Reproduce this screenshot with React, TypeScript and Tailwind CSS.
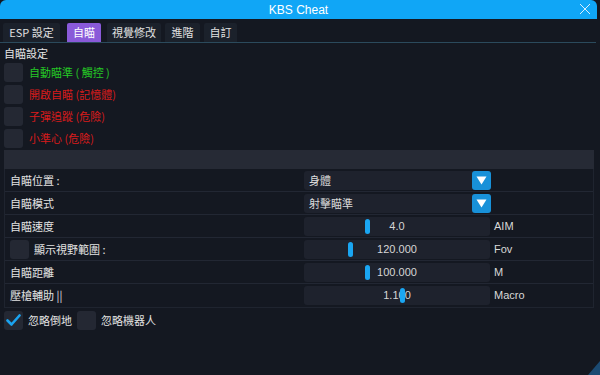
import React from "react";

const font = { fontFamily: '"Noto Sans CJK TC", "Liberation Sans", sans-serif' };

function Box({ checked = false }: { checked?: boolean }) {
  return (
    <div className="w-[19px] h-[19px] rounded-[3px] bg-[#242833] flex items-center justify-center shrink-0">
      {checked && (
        <svg width="15" height="13" viewBox="0 0 15 13">
          <path d="M1.5 6.5 L5.5 10.5 L13.5 1.5" fill="none" stroke="#1aa3f0" strokeWidth="2.6" strokeLinecap="round" strokeLinejoin="round" />
        </svg>
      )}
    </div>
  );
}

function Combo({ value }: { value: string }) {
  return (
    <div className="w-[187px] h-[19px] rounded-[3px] bg-[#1e222d] flex items-center justify-between">
      <span className="pl-[5px] text-[11px] text-[#dcdcdc]">{value}</span>
      <div className="w-[19px] h-[19px] rounded-[3px] bg-[#1891d9] flex items-center justify-center">
        <svg width="11" height="9" viewBox="0 0 11 9">
          <path d="M0.5 0.5 L10.5 0.5 L5.5 8.5 Z" fill="#ffffff" />
        </svg>
      </div>
    </div>
  );
}

function Slider({ value, pos }: { value: string; pos: number }) {
  return (
    <div className="relative w-[186px] h-[19px] rounded-[3px] bg-[#1e222d] flex items-center justify-center">
      <span className="text-[11px] text-[#d6d6d6]" style={{ fontFamily: '"Liberation Sans", sans-serif' }}>{value}</span>
      <div className="absolute top-[2px] w-[5px] h-[15px] rounded-[3px] bg-[#1aa6f2]" style={{ left: pos }} />
    </div>
  );
}

function Row({ label, right, unit, last = false }: { label: React.ReactNode; right: React.ReactNode; unit?: string; last?: boolean }) {
  return (
    <div className={`flex h-[23px] items-center ${last ? "" : "border-b border-[#222733]"}`}>
      <div className="w-[299px] pl-[5px] text-[11px] text-[#e2e2e2] flex items-center h-full">{label}</div>
      <div className="flex items-center gap-[4px]">
        {right}
        {unit && <span className="text-[11px] text-[#d8d8d8]" style={{ fontFamily: '"Liberation Sans", sans-serif' }}>{unit}</span>}
      </div>
    </div>
  );
}

export default function App() {
  const tabs = [
    { t: "ESP 設定", w: 57, ml: 3 },
    { t: "自瞄", w: 34, ml: 7, active: true },
    { t: "視覺修改", w: 54, ml: 6 },
    { t: "進階", w: 35, ml: 4 },
    { t: "自訂", w: 33, ml: 4 },
  ];
  return (
    <div className="relative w-[600px] h-[375px] bg-[#141821] overflow-hidden" style={font}>
      <div className="h-[19px] bg-[#10a6f6] rounded-t-[6px] mr-[3px] flex items-center justify-center relative">
        <span className="text-[12px] text-white" style={{ fontFamily: '"Liberation Sans", sans-serif' }}>KBS Cheat</span>
        <svg className="absolute right-[6px] top-[3px]" width="12" height="12" viewBox="0 0 12 12">
          <path d="M1 1 L11 11 M11 1 L1 11" stroke="#d7efff" strokeWidth="1" />
        </svg>
      </div>
      <div className="flex mt-[4px] h-[19px]">
        {tabs.map((tb) => (
          <div
            key={tb.t}
            className={`h-full flex items-center justify-center text-[11px] rounded-t-[2px] ${tb.active ? "bg-[#8a5ad9] text-white" : "bg-[#1b212b] text-[#e0e0e0]"}`}
            style={{ width: tb.w, marginLeft: tb.ml }}
          >
            {tb.t}
          </div>
        ))}
      </div>
      <div className="h-[1px] bg-[#2b4a5c] mr-[4px]" />
      <div className="pl-[4px] pr-[6px]">
        <div className="text-[11px] text-[#e6e6e6] h-[16px] leading-[16px] mt-[2px]">自瞄設定</div>
        <div className="flex flex-col gap-[3px] mt-[2px]">
          {[
            { t: "自動瞄準 ( 觸控 )", c: "#25c925" },
            { t: "開啟自瞄 (記憶體)", c: "#d81b1b" },
            { t: "子彈追蹤 (危險)", c: "#d81b1b" },
            { t: "小準心 (危險)", c: "#d81b1b" },
          ].map((it) => (
            <div key={it.t} className="flex items-center gap-[6px] h-[19px]">
              <Box />
              <span className="text-[11px]" style={{ color: it.c }}>{it.t}</span>
            </div>
          ))}
        </div>
        <div className="h-[19px] bg-[#262a35] mt-[2px]" />
        <div className="border-x border-b border-[#1f242f]">
          <Row label="自瞄位置 :" right={<Combo value="身體" />} />
          <Row label="自瞄模式" right={<Combo value="射擊瞄準" />} />
          <Row label="自瞄速度" right={<Slider value="4.0" pos={61} />} unit="AIM" />
          <Row
            label={
              <div className="flex items-center gap-[5px]">
                <Box />
                <span>顯示視野範圍 :</span>
              </div>
            }
            right={<Slider value="120.000" pos={44} />}
            unit="Fov"
          />
          <Row label="自瞄距離" right={<Slider value="100.000" pos={61} />} unit="M" />
          <Row label="壓槍輔助 ||" right={<Slider value="1.100" pos={96} />} unit="Macro" last />
        </div>
        <div className="flex items-center mt-[3px] h-[19px]">
          <Box checked />
          <span className="text-[11px] text-[#e2e2e2] ml-[5px]">忽略倒地</span>
          <div className="ml-[5px]"><Box /></div>
          <span className="text-[11px] text-[#e2e2e2] ml-[5px]">忽略機器人</span>
        </div>
      </div>
      <svg className="absolute right-0 bottom-0" width="12" height="14" viewBox="0 0 12 14">
        <path d="M12 0 L12 14 L0 14 Z" fill="#1b4a72" />
      </svg>
    </div>
  );
}
